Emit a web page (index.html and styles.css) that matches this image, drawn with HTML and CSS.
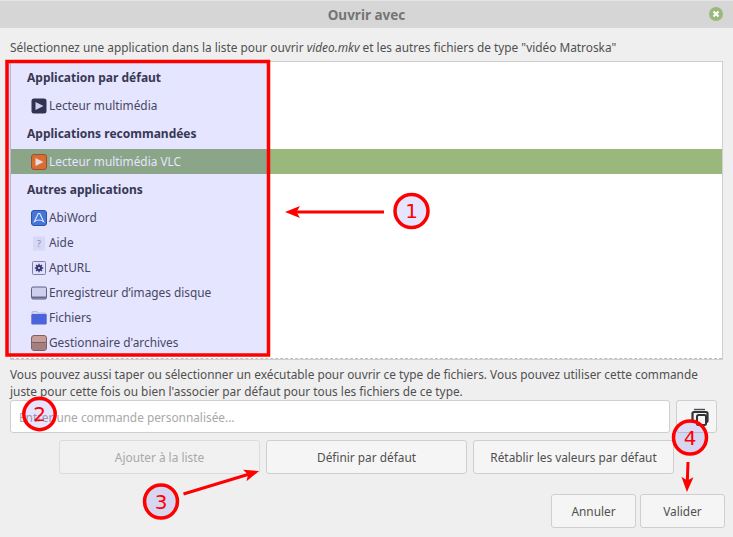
FILE: index.html
```html
<!DOCTYPE html>
<html lang="fr">
<head>
    <meta charset="UTF-8">
    <meta name="viewport" content="width=device-width, initial-scale=1.0">
    <title>Ouvrir avec</title>
    <link rel="stylesheet" href="styles.css">
</head>
<body>
    <div class="dialog">
        <div class="titlebar">
            <span class="title">Ouvrir avec</span>
            <span class="close">
                <svg width="14" height="14" viewBox="0 0 14 14"><path d="M4.500 4.500l5 5M9.500 4.500l-5 5" class="close-x"/></svg>
            </span>
        </div>

        <p class="intro">Sélectionnez une application dans la liste pour ouvrir <em>video.mkv</em> et les autres fichiers de type "vidéo Matroska"</p>

        <div class="app-list">
            <div class="group-title">Application par défaut</div>
            <div class="app-row">
                <svg class="app-icon" viewBox="0 0 16 16"><rect x="0.500" y="0.500" width="15" height="15" rx="2.500" fill="#38383f"/><path d="M4.500 4l8 4-8 4z" fill="#e8e8ea"/></svg>
                <span>Lecteur multimédia</span>
            </div>
            <div class="group-title">Applications recommandées</div>
            <div class="app-row selected">
                <svg class="app-icon" viewBox="0 0 16 16"><rect x="0.500" y="0.500" width="15" height="15" rx="2.500" fill="#f57a18" stroke="#a65a20"/><path d="M4.500 4l8 4-8 4z" fill="#fff6e4"/></svg>
                <span>Lecteur multimédia VLC</span>
            </div>
            <div class="group-title">Autres applications</div>
            <div class="app-row">
                <svg class="app-icon" viewBox="0 0 16 16"><rect x="0.500" y="0.500" width="15" height="15" rx="2.500" fill="#4a84d4" stroke="#345c9c"/><path d="M3.500 11.500l3.700-8h1.600l3.700 8q-4.500-3-9 0z" fill="none" stroke="#fff" stroke-width="1.100"/></svg>
                <span>AbiWord</span>
            </div>
            <div class="app-row">
                <svg class="app-icon" viewBox="0 0 16 16"><rect x="2" y="1.500" width="12" height="14" fill="#f0f0f6"/><text x="8" y="11.500" class="help-mark">?</text></svg>
                <span>Aide</span>
            </div>
            <div class="app-row">
                <svg class="app-icon" viewBox="0 0 16 16"><rect x="1.500" y="1.500" width="13" height="13" rx="1" fill="#fafaff" stroke="#8c8c9c"/><path d="M8 3.800v8.400M3.800 8h8.400M5 5l6 6M11 5l-6 6" stroke="#3c3c60" stroke-width="1.300"/><circle cx="8" cy="8" r="2.900" fill="#3c3c60"/><circle cx="8" cy="8" r="1" fill="#fafaff"/></svg>
                <span>AptURL</span>
            </div>
            <div class="app-row">
                <svg class="app-icon" viewBox="0 0 16 16"><rect x="0.500" y="2" width="15" height="12" rx="1.500" fill="#e6e6ee" stroke="#6a6a74"/><rect x="1" y="11.500" width="14" height="2" fill="#74747e"/></svg>
                <span>Enregistreur d’images disque</span>
            </div>
            <div class="app-row">
                <svg class="app-icon" viewBox="0 0 16 16"><path d="M1 4V2.500q0-1 1-1h4l1.500 1.500H14q1 0 1 1v1z" fill="#eeeef6" stroke="#b4b4c4" stroke-width="0.600"/><rect x="0.300" y="4" width="15.400" height="10.500" rx="1.200" fill="#5470d8"/></svg>
                <span>Fichiers</span>
            </div>
            <div class="app-row">
                <svg class="app-icon" viewBox="0 0 16 16"><rect x="0.500" y="0.500" width="15" height="15" rx="2.500" fill="#dcb08c" stroke="#8a6c54"/><rect x="1" y="8" width="14" height="7" rx="1.500" fill="#b88e72"/><path d="M1 7.500h14" stroke="#8a6c54"/></svg>
                <span>Gestionnaire d'archives</span>
            </div>
            <div class="app-row">
                <svg class="app-icon" viewBox="0 0 16 16"><rect x="0.500" y="0.500" width="15" height="15" rx="1" fill="#8c8278"/></svg>
            </div>
        </div>

        <p class="hint">Vous pouvez aussi taper ou sélectionner un exécutable pour ouvrir ce type de fichiers. Vous pouvez utiliser cette commande juste pour cette fois ou bien l'associer par défaut pour tous les fichiers de ce type.</p>

        <div class="command-row">
            <input class="command-input" type="text" placeholder="Entrer une commande personnalisée...">
            <button class="btn btn-browse" type="button">
                <svg width="18" height="18" viewBox="0 0 18 18"><path d="M3 1.500h11" fill="none" stroke="#4a4a4e" stroke-width="1.400"/><rect x="1.500" y="4" width="15" height="10" rx="1.500" fill="none" stroke="#333337" stroke-width="2.200"/><rect x="6" y="7" width="9" height="10" rx="1.500" fill="#f5f5f5" stroke="#333337" stroke-width="2"/></svg>
            </button>
        </div>

        <div class="action-row">
            <button class="btn btn-action" type="button" disabled>Ajouter à la liste</button>
            <button class="btn btn-action" type="button">Définir par défaut</button>
            <button class="btn btn-action" type="button">Rétablir les valeurs par défaut</button>
        </div>

        <div class="footer-row">
            <button class="btn btn-footer" type="button">Annuler</button>
            <button class="btn btn-footer" type="button">Valider</button>
        </div>
    </div>

    <!-- red annotations drawn over the dialog -->
    <svg class="callouts" width="733" height="537" viewBox="0 0 733 537">
        <defs>
            <marker id="head" markerUnits="userSpaceOnUse" markerWidth="16" markerHeight="14" refX="5" refY="6.500" orient="auto">
                <path d="M0 0.500l15 6-15 6 3.500-6z" fill="#ff0000"/>
            </marker>
        </defs>
        <rect class="callout-box" x="7" y="61.500" width="261.500" height="293.500"/>
        <line class="callout-arrow" x1="384" y1="212" x2="295" y2="212"/>
        <line class="callout-arrow" x1="183.500" y1="494" x2="249.500" y2="474"/>
        <line class="callout-arrow" x1="688" y1="462" x2="687.300" y2="482"/>
        <g>
            <circle class="callout-dot" cx="411.500" cy="211" r="16.500"/>
            <text class="callout-num" x="411.500" y="218">1</text>
            <circle class="callout-dot" cx="39.500" cy="414" r="15.700"/>
            <text class="callout-num" x="39.500" y="421">2</text>
            <circle class="callout-dot" cx="161" cy="501.500" r="16.500"/>
            <text class="callout-num" x="161" y="508.500">3</text>
            <circle class="callout-dot" cx="690" cy="437.500" r="16.500"/>
            <text class="callout-num" x="690" y="444.500">4</text>
        </g>
    </svg>
</body>
</html>
```

FILE: styles.css
```css
* {
    margin: 0;
    padding: 0;
    box-sizing: border-box;
}

body {
    position: relative;
    width: 733px;
    height: 537px;
    overflow: hidden;
    font-family: "Noto Sans", sans-serif;
    font-size: 11.85px;
    background-color: #efefef;
    color: #505050;
}

.dialog {
    display: flex;
    flex-direction: column;
    height: 537px;
}

.titlebar {
    display: flex;
    align-items: center;
    justify-content: center;
    position: relative;
    height: 28px;
    background: #d6d6d6;
    border-top: 1px solid #e6e6e6;
}

.title {
    font-weight: 700;
    font-size: 13.5px;
    color: #757575;
}

.close {
    position: absolute;
    right: 10px;
    top: 6px;
    width: 14px;
    height: 14px;
    border-radius: 50%;
    background: #9ab87b;
}

.close svg {
    display: block;
}

.close-x {
    fill: none;
    stroke: #fff;
    stroke-width: 2;
}

.intro {
    height: 33px;
    padding: 10px 0 0 10px;
    line-height: 18px;
    white-space: nowrap;
}

.app-list {
    position: relative;
    height: 299px;
    margin: 0 10.500px 0 10px;
    background: #fff;
    border: 1px solid #cfcfcf;
    overflow: hidden;
}

.app-list::after {
    content: "";
    position: absolute;
    left: 0;
    right: 0;
    bottom: 0;
    border-bottom: 1px dashed #bdbdbd;
}

.group-title {
    display: flex;
    align-items: center;
    height: 31px;
    padding-left: 16px;
    font-size: 12px;
    font-weight: 700;
    color: #404040;
}

.app-row {
    display: flex;
    align-items: center;
    gap: 2px;
    height: 25px;
    padding-left: 20px;
    color: #505050;
}

.app-row span {
    padding-bottom: 2px;
}

.app-row.selected {
    background: #9ab87b;
    color: #fff;
}

.app-icon {
    width: 16px;
    height: 16px;
    flex: none;
}

.help-mark {
    font-family: "Noto Sans", sans-serif;
    font-size: 9px;
    text-anchor: middle;
    fill: #9a9aa4;
}

.hint {
    margin: 6px 10px 0;
    line-height: 17px;
    height: 34px;
}

.command-row {
    display: flex;
    gap: 6px;
    height: 33px;
    padding: 0 16px 0 10px;
}

.command-input {
    flex: 1;
    padding: 0 8px;
    border: 1px solid #cfcfcf;
    border-radius: 3px;
    background: #fff;
    font-family: inherit;
    font-size: 11.85px;
    color: #505050;
}

.command-input::placeholder {
    color: #a8a8a8;
    opacity: 1;
}

.btn {
    border: 1px solid #cfcfcf;
    border-radius: 3px;
    background: #f5f5f5;
    font-family: inherit;
    font-size: 11.85px;
    color: #505050;
}

.btn:disabled {
    color: #a8a8a8;
    border-color: #dcdcdc;
    background: #f1f1f1;
}

.btn-browse {
    display: flex;
    align-items: center;
    justify-content: center;
    width: 41px;
    padding-left: 7px;
}

.action-row {
    display: flex;
    gap: 6px;
    margin-top: 7px;
    padding-left: 59px;
}

.btn-action {
    width: 201px;
    height: 34px;
}

.footer-row {
    display: flex;
    justify-content: flex-end;
    gap: 4px;
    margin-top: 20px;
    padding-right: 8px;
}

.btn-footer {
    width: 85px;
    height: 34px;
}

.callouts {
    position: absolute;
    left: 0;
    top: 0;
}

.callout-box {
    fill: rgba(0, 0, 255, 0.1);
    stroke: #ff0000;
    stroke-width: 3.500;
}

.callout-arrow {
    stroke: #ff0000;
    stroke-width: 3;
    marker-end: url(#head);
}

.callout-dot {
    fill: rgba(0, 0, 255, 0.1);
    stroke: #ff0000;
    stroke-width: 3.500;
}

.callout-num {
    font-family: "DejaVu Sans", sans-serif;
    font-size: 20px;
    text-anchor: middle;
    fill: #ff0000;
}
```
